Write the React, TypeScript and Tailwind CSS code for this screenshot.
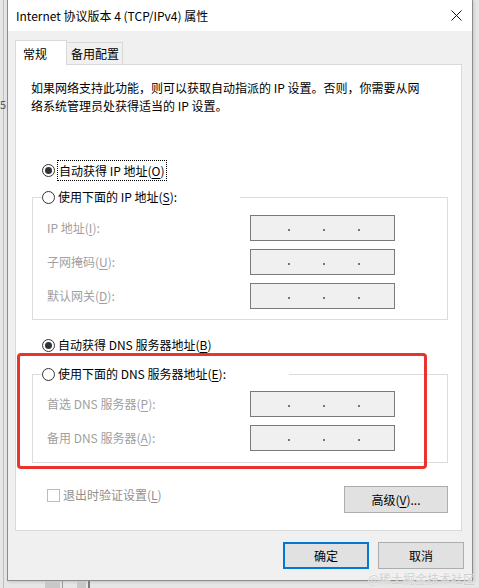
import React from "react";

const F = "font-['Noto_Sans_CJK_SC','Noto_Sans',sans-serif]";

function U({ c }: { c: string }) {
  return <span className="underline underline-offset-[2px] decoration-1">{c}</span>;
}

function Radio({ checked }: { checked?: boolean }) {
  return (
    <span className="w-[13px] h-[13px] rounded-full border border-[#333333] bg-white flex items-center justify-center shrink-0">
      {checked && <span className="w-[7px] h-[7px] rounded-full bg-[#333333]" />}
    </span>
  );
}

function IpBox() {
  return (
    <div className="w-[145px] h-[26px] border border-[#7a7a7a] bg-[#f0f0f0] flex items-center pl-[37px] gap-[33px] pt-[4px] shrink-0">
      <span className="w-[2px] h-[2px] bg-[#777777]" />
      <span className="w-[2px] h-[2px] bg-[#777777]" />
      <span className="w-[2px] h-[2px] bg-[#777777]" />
    </div>
  );
}

function Row({ label }: { label: React.ReactNode }) {
  return (
    <div className="flex items-center h-[26px]">
      <span className="w-[203px] text-[#a0a0a0] leading-[20px]">{label}</span>
      <IpBox />
    </div>
  );
}

export default function App() {
  return (
    <div className={`${F} relative w-[479px] h-[588px] bg-[#e6e6e6] overflow-hidden text-[12px] text-black`}>
      {/* background strip details */}
      <div className="absolute left-[3px] top-0 w-[1px] h-[588px] bg-[#bdbdbd]" />
      <div className="absolute left-0 top-[97px] text-[11px] leading-[14px] text-[#555]">5</div>
      <div className="absolute left-[45px] top-[581px] w-[15px] h-[7px] bg-[#c8c8c8]" />
      <div className="absolute left-[62px] top-[581px] w-[1px] h-[7px] bg-[#9a9a9a]" />
      <div className="absolute left-[77px] top-[581px] w-[9px] h-[7px] bg-[#c8c8c8]" />
      <div className="absolute left-[88px] top-[581px] w-[2px] h-[7px] bg-[#7a7a7a]" />

      {/* window */}
      <div className="ml-[7px] w-[466px] h-[581px] border-x border-b border-[#8c8c8c] flex flex-col bg-[#f0f0f0] shadow-[1px_1px_3px_rgba(0,0,0,0.15)]">
        {/* title bar */}
        <div className="h-[31px] bg-white flex items-center justify-between pl-[8px] pr-[10px] shrink-0">
          <span className="leading-[16px] pt-[1px]">Internet 协议版本 4 (TCP/IPv4) 属性</span>
          <svg width="11" height="11" viewBox="0 0 11 11" className="mr-[0px]">
            <path d="M0.5 0.5 L10.5 10.5 M10.5 0.5 L0.5 10.5" stroke="#111" strokeWidth="1" />
          </svg>
        </div>

        {/* body */}
        <div className="flex flex-col pt-[9px]">
          {/* tabs */}
          <div className="flex items-end h-[24px] pl-[7px]">
            <div className="relative z-10 w-[52px] h-[25px] -mb-px bg-white border-x border-t border-[#d9d9d9] flex items-start pl-[7px] pt-[3px] leading-[20px]">
              常规
            </div>
            <div className="-ml-px w-[57px] h-[22px] bg-[#f0f0f0] border-x border-t border-[#d9d9d9] flex items-start pl-[4px] pt-[1px] leading-[20px]">
              备用配置
            </div>
          </div>

          {/* panel */}
          <div className="ml-[7px] w-[447px] bg-white border border-[#d9d9d9] flex flex-col">
            <p className="mt-[14px] pl-[15px] leading-[18px] whitespace-nowrap">
              如果网络支持此功能，则可以获取自动指派的 IP 设置。否则，你需要从网
              <br />
              络系统管理员处获得适当的 IP 设置。
            </p>

            <div className="mt-[45px] ml-[26px] h-[20px] flex items-center">
              <Radio checked />
              <span className="ml-[2px] border border-dotted border-black px-px h-[21px] leading-[19px]">
                自动获得 IP 地址(<U c="O" />)
              </span>
            </div>

            <fieldset className="mt-[7px] ml-[16px] w-[416px] border border-[#dcdcdc] m-0 p-0">
              <legend className="ml-[9px] w-[198px] h-[20px] flex items-center bg-white p-0">
                <Radio />
                <span className="ml-[3px] leading-[20px]">
                  使用下面的 IP 地址(<U c="S" />):
                </span>
              </legend>
              <div className="pt-[8px] pb-[10px] pl-[14px] flex flex-col gap-[8px]">
                <Row label={<>IP 地址(<U c="I" />):</>} />
                <Row label={<>子网掩码(<U c="U" />):</>} />
                <Row label={<>默认网关(<U c="D" />):</>} />
              </div>
            </fieldset>

            <div className="mt-[15px] ml-[26px] h-[20px] flex items-center">
              <Radio checked />
              <span className="ml-[3px] leading-[20px]">
                自动获得 DNS 服务器地址(<U c="B" />)
              </span>
            </div>

            <fieldset className="mt-[9px] ml-[16px] w-[416px] border border-[#dcdcdc] m-0 p-0">
              <legend className="ml-[9px] w-[247px] h-[20px] flex items-center bg-white p-0">
                <Radio />
                <span className="ml-[3px] leading-[20px]">
                  使用下面的 DNS 服务器地址(<U c="E" />):
                </span>
              </legend>
              <div className="pt-[7px] pb-[11px] pl-[14px] flex flex-col gap-[8px]">
                <Row label={<>首选 DNS 服务器(<U c="P" />):</>} />
                <Row label={<>备用 DNS 服务器(<U c="A" />):</>} />
              </div>
            </fieldset>

            <div className="mt-[23px] mb-[17px] flex items-start justify-between pl-[31px] pr-[13px]">
              <div className="mt-[1px] flex items-center h-[16px]">
                <span className="w-[13px] h-[13px] border border-[#bcbcbc] bg-white" />
                <span className="ml-[3px] text-[#8f8f8f] leading-[16px]">
                  退出时验证设置(<U c="L" />)
                </span>
              </div>
              <button className="w-[104px] h-[27px] bg-[#e1e1e1] border border-[#adadad] leading-[20px] flex items-center justify-center">
                高级(<U c="V" />)...
              </button>
            </div>
          </div>

          {/* dialog buttons */}
          <div className="mt-[11px] flex justify-end gap-[9px] pr-[8px]">
            <button className="w-[86px] h-[27px] bg-[#e1e1e1] border-2 border-[#0078d7] leading-[20px] flex items-center justify-center">
              确定
            </button>
            <button className="w-[86px] h-[27px] bg-[#e1e1e1] border border-[#adadad] leading-[20px] flex items-center justify-center">
              取消
            </button>
          </div>
        </div>
      </div>

      {/* red annotation */}
      <div className="absolute left-[17px] top-[353px] w-[410px] h-[116px] border-[3px] border-[#e8342c] rounded-[4px]" />

      {/* watermark */}
      <div className="absolute right-[4px] top-[572px] text-[12px] leading-[14px] text-[#cfcfcf] [text-shadow:0_0_1px_#ffffff]">
        @稀土掘金技术社区
      </div>
    </div>
  );
}
